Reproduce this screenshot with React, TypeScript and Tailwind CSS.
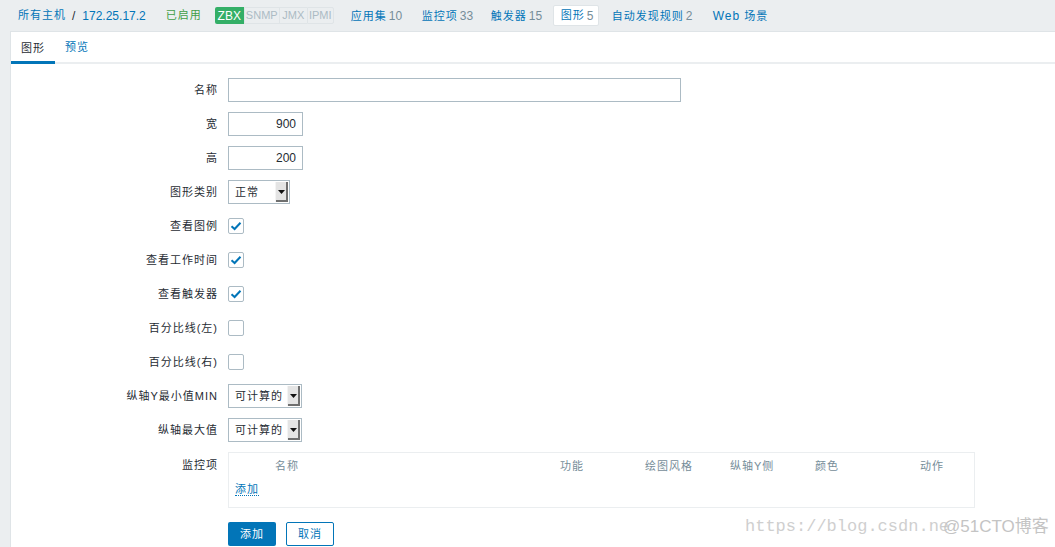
import React from "react";

const blue = "text-[#0275b8]";

function Arrow() {
  return (
    <span className="flex h-full w-[13px] items-center justify-center border-l border-[#f4f4f4] bg-[#e4e4e4] shadow-[inset_-2px_-2px_0_#6f6f6f]">
      <svg width="7" height="4" viewBox="0 0 7 4" className="mr-[1px]">
        <path d="M0 0h7L3.5 4z" fill="#111" />
      </svg>
    </span>
  );
}

function Select({ value, w }: { value: string; w: string }) {
  return (
    <div className={`flex h-[24px] items-stretch border border-[#acbbc4] bg-white ${w}`}>
      <span className="flex flex-1 items-center pl-[6px] text-[11px] tracking-[1px] text-[#1f2c33]">
        {value}
      </span>
      <div className="py-[1px] pr-[1px]">
        <Arrow />
      </div>
    </div>
  );
}

function Check({ on }: { on: boolean }) {
  return (
    <div className="flex h-[16px] w-[16px] items-center justify-center rounded-[2px] border border-[#acbbc4] bg-white">
      {on && (
        <svg width="12" height="10" viewBox="0 0 12 10">
          <path d="M1.5 5.2 4.6 8 10.5 1.8" stroke="#0275b8" strokeWidth="2" fill="none" />
        </svg>
      )}
    </div>
  );
}

function Row({ label, children }: { label: string; children: React.ReactNode }) {
  return (
    <div className="flex h-[24px] items-center">
      <div className="w-[217px] pr-[10px] text-right text-[11px] tracking-[1px] text-[#1f2c33]">
        {label}
      </div>
      {children}
    </div>
  );
}

const nav = [
  { t: "应用集", n: "10", w: "w-[71px]" },
  { t: "监控项", n: "33", w: "w-[69px]" },
  { t: "触发器", n: "15", w: "w-[70px]" },
];

export default function App() {
  return (
    <div
      className="relative min-h-[547px] overflow-hidden bg-[#ebeef0]"
      style={{ fontFamily: '"Liberation Sans", "Noto Sans CJK SC", sans-serif' }}
    >
      {/* header */}
      <div className="flex h-[31px] items-center pl-[18px] text-[12px]">
        <span className={`text-[11px] tracking-[1px] ${blue}`}>所有主机</span>
        <span className="ml-[6px] text-[#1f2c33]">/</span>
        <span className={`ml-[7px] ${blue}`}>172.25.17.2</span>
        <span className="ml-[20px] text-[11px] tracking-[1px] text-[#429e47]">已启用</span>
        <div className="ml-[13px] flex h-[17px] items-stretch text-[11px]">
          <span className="flex w-[29px] items-center justify-center rounded-l-[2px] bg-[#34af67] text-[12px] text-white">ZBX</span>
          <span className="flex w-[36px] items-center justify-center border border-[#dfe4e7] text-[#acbbc4]">SNMP</span>
          <span className="flex w-[27px] items-center justify-center border-y border-[#dfe4e7] text-[#acbbc4]">JMX</span>
          <span className="flex w-[27px] items-center justify-center rounded-r-[2px] border border-[#dfe4e7] text-[#acbbc4]">IPMI</span>
        </div>
        <div className="ml-[9px] flex items-center">
          {nav.map((i) => (
            <span key={i.t} className={`${i.w} pl-[8px]`}>
              <span className={`text-[11px] tracking-[1px] ${blue}`}>{i.t}</span>
              <span className="ml-[2px] text-[#768d99]">{i.n}</span>
            </span>
          ))}
          <span className="flex h-[21px] w-[46px] items-center rounded-[2px] border border-[#dfe4e7] bg-white pl-[7px]">
            <span className={`text-[11px] tracking-[1px] ${blue}`}>图形</span>
            <span className="ml-[2px] text-[#768d99]">5</span>
          </span>
          <span className="w-[114px] pl-[13px]">
            <span className={`text-[11px] tracking-[1px] ${blue}`}>自动发现规则</span>
            <span className="ml-[2px] text-[#768d99]">2</span>
          </span>
          <span className={`text-[11px] tracking-[1px] ${blue}`}>
            <span className="text-[12px]">Web</span> 场景
          </span>
        </div>
      </div>

      {/* body */}
      <div className="pl-[10px]">
        <div className="min-h-[516px] border-l border-t border-[#dfe4e7] bg-white">
          <div className="flex h-[32px] border-b-2 border-[#ebeef0]">
            <div className="-mb-[2px] flex w-[44px] items-center justify-center border-b-[3px] border-[#0275b8] pt-[3px] text-[11px] tracking-[1px] text-[#1f2c33]">
              图形
            </div>
            <div className={`flex w-[44px] items-center justify-center text-[11px] tracking-[1px] ${blue}`}>
              预览
            </div>
          </div>

          <div className="flex flex-col gap-[10px] pt-[14px]">
            <Row label="名称">
              <div className="h-[24px] w-[453px] border border-[#acbbc4]" />
            </Row>
            <Row label="宽">
              <div className="flex h-[24px] w-[75px] items-center justify-end border border-[#acbbc4] pr-[6px] text-[12px] text-[#1f2c33]">900</div>
            </Row>
            <Row label="高">
              <div className="flex h-[24px] w-[75px] items-center justify-end border border-[#acbbc4] pr-[6px] text-[12px] text-[#1f2c33]">200</div>
            </Row>
            <Row label="图形类别">
              <Select value="正常" w="w-[62px]" />
            </Row>
            <Row label="查看图例">
              <Check on />
            </Row>
            <Row label="查看工作时间">
              <Check on />
            </Row>
            <Row label="查看触发器">
              <Check on />
            </Row>
            <Row label="百分比线(左)">
              <Check on={false} />
            </Row>
            <Row label="百分比线(右)">
              <Check on={false} />
            </Row>
            <Row label="纵轴Y最小值MIN">
              <Select value="可计算的" w="w-[74px]" />
            </Row>
            <Row label="纵轴最大值">
              <Select value="可计算的" w="w-[74px]" />
            </Row>

            <div className="flex items-start">
              <div className="w-[217px] pr-[10px] pt-[5px] text-right text-[11px] tracking-[1px] text-[#1f2c33]">监控项</div>
              <div className="h-[56px] w-[747px] border border-[#ebeef0] text-[11px] tracking-[1px] text-[#768d99]">
                <div className="flex pl-[46px] pt-[5px]">
                  <span className="w-[285px]">名称</span>
                  <span className="w-[85px]">功能</span>
                  <span className="w-[85px]">绘图风格</span>
                  <span className="w-[85px]">纵轴Y侧</span>
                  <span className="w-[105px]">颜色</span>
                  <span>动作</span>
                </div>
                <div className="pl-[6px] pt-[6px]">
                  <span className={`border-b border-dotted border-[#0275b8] ${blue}`}>添加</span>
                </div>
              </div>
            </div>

            <div className="flex pl-[217px] pt-[4px]">
              <button className="h-[24px] w-[48px] rounded-[2px] bg-[#0275b8] text-[11px] tracking-[1px] text-white">添加</button>
              <button className={`ml-[10px] h-[24px] w-[48px] rounded-[2px] border border-[#0275b8] bg-white text-[11px] tracking-[1px] ${blue}`}>取消</button>
            </div>
          </div>
        </div>
      </div>

      {/* watermark */}
      <div className="pointer-events-none absolute left-[745px] top-[514px] flex items-center">
        <span className="text-[17px] text-[#cfcfcf]" style={{ fontFamily: '"Liberation Mono", monospace' }}>
          https://blog.csdn.ne
        </span>
        <span className="-ml-[6px] text-[17px] text-[#c4c4c4]">@51CTO博客</span>
      </div>
    </div>
  );
}
